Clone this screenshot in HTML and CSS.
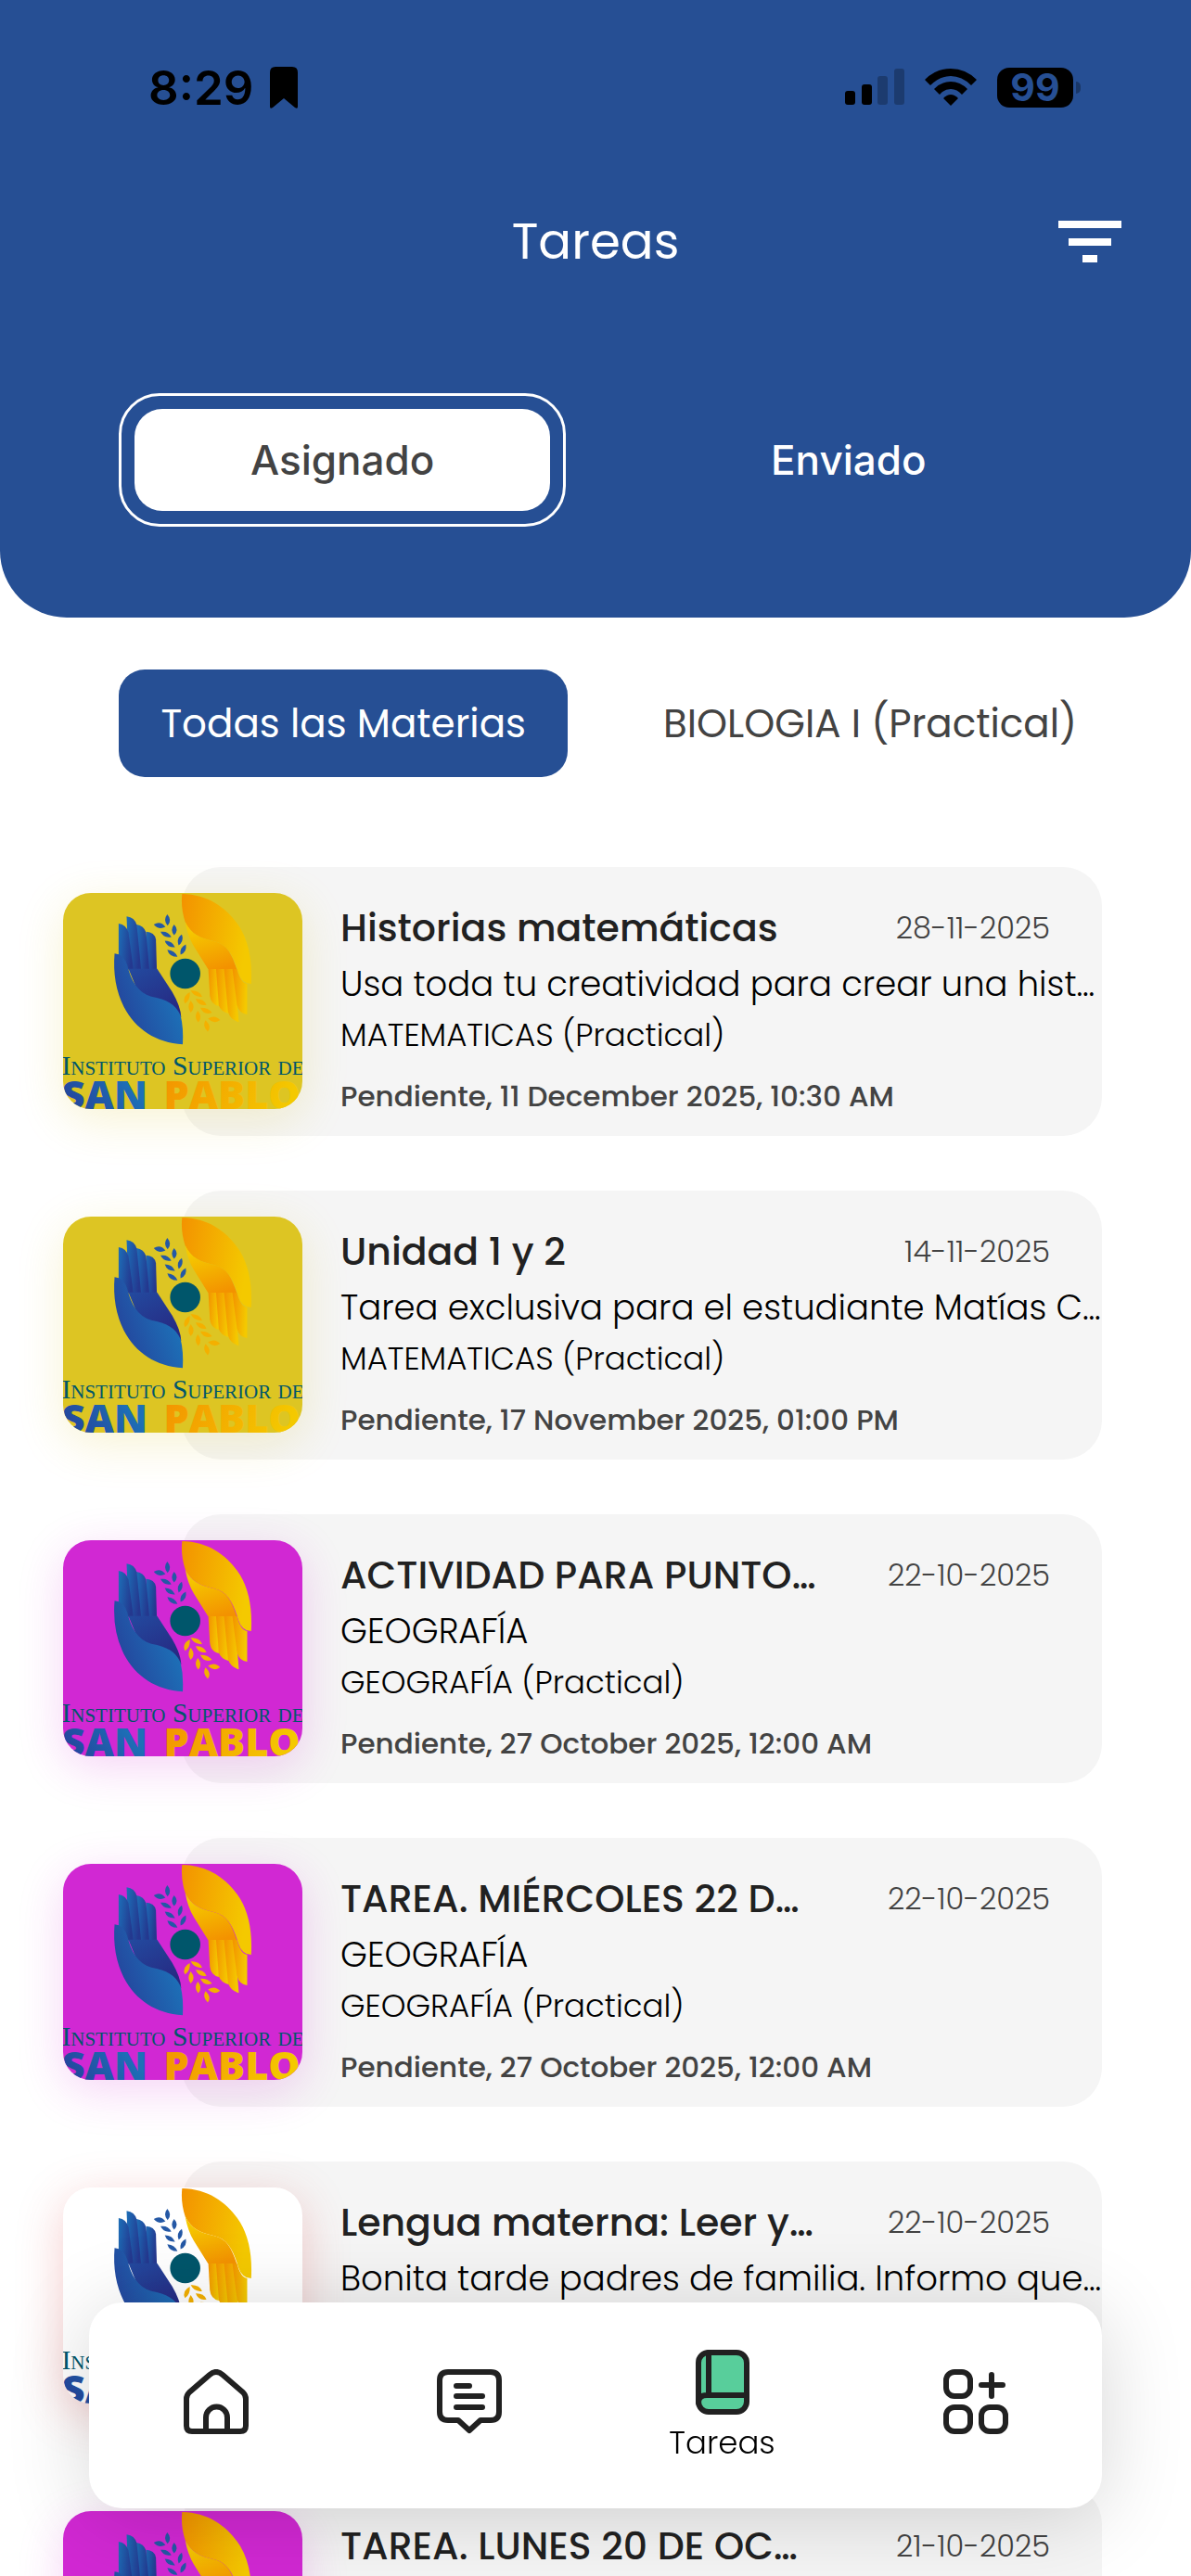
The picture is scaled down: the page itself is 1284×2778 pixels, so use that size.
FILE: index.html
```
<!DOCTYPE html>
<html lang="es">
<head>
  <meta charset="UTF-8" />
  <meta name="viewport" content="width=device-width, initial-scale=1.0"/>
  <title>Tareas</title>
  <link rel="stylesheet" href="styles.css">
</head>
<body>
  <!-- shared school logo -->
  <svg class="defs" width="0" height="0" aria-hidden="true">
    <defs>
      <linearGradient id="blueA" x1="0" y1="0" x2="1" y2="0.3">
        <stop offset="0" stop-color="#1d6fb8"/><stop offset="1" stop-color="#24388f"/>
      </linearGradient>
      <linearGradient id="blueB" x1="0.9" y1="0.5" x2="0.1" y2="0.9">
        <stop offset="0" stop-color="#1d70b7"/><stop offset="1" stop-color="#25419a"/>
      </linearGradient>
      <linearGradient id="blueC" x1="0" y1="0" x2="0.6" y2="1">
        <stop offset="0" stop-color="#234a9f"/><stop offset="1" stop-color="#262a83"/>
      </linearGradient>
      <linearGradient id="goldA" x1="0" y1="0" x2="1" y2="0.2">
        <stop offset="0" stop-color="#f39200"/><stop offset="1" stop-color="#f4c900"/>
      </linearGradient>
      <linearGradient id="goldB" x1="0.4" y1="0.1" x2="0.7" y2="1">
        <stop offset="0" stop-color="#f5c800"/><stop offset="1" stop-color="#f39200"/>
      </linearGradient>
      <symbol id="logo" viewBox="24 18 776 699">
        <g fill="url(#blueA)">
          <path d="M294 143Q320 144 325 168L328 265H290Z"/>
          <path d="M262 119Q286 122 293 145L304 265H262Z"/>
          <path d="M230 93Q256 96 263 121L277 265H237Z"/>
          <path d="M204 116Q229 120 236 145L252 265H204Z"/>
        </g>
        <path fill="url(#blueC)" d="M236 263H329L378 338Q405 384 407 420L340 385L270 345Z"/>
        <path fill="url(#blueB)" d="M191 213Q221 215 232 251C245 303 266 340 310 353C360 362 388 377 405 414Q415 455 412 508C325 502 260 460 221 386Q183 310 191 213Z"/>
        <path fill="url(#goldA)" d="M410 20C500 22 560 70 598 130Q640 200 634 312Q604 312 592 275C575 215 555 184 515 174C465 164 440 150 420 111Q405 66 410 20Z"/>
        <path fill="url(#goldB)" d="M420 111C440 150 465 164 515 174C555 184 570 212 587 264H494L448 190Q428 157 420 111Z"/>
        <g fill="url(#goldA)">
          <path d="M495 264H530L529 384Q503 378 500 350Z"/>
          <path d="M520 264H555L562 409Q535 402 529 382Z"/>
          <path d="M546 264H580L594 436Q565 427 559 402Z"/>
          <path d="M573 264H588Q600 310 621 312V411Q594 407 588 380Z"/>
        </g>
        <circle cx="420" cy="279" r="49" fill="#00566b"/>
        <g fill="#2458a5">
          <path d="M362 86Q379 106 363 123Q347 105 362 86Z"/>
          <path d="M384 119Q401 137 384 154Q370 137 384 119Z"/>
          <path d="M409 152Q417 174 399 187Q390 165 409 152Z"/>
          <path d="M422 184Q427 208 405 217Q401 194 422 184Z"/>
          <path d="M318 119Q340 106 356 127Q334 138 318 119Z"/>
          <path d="M340 143Q364 139 375 160Q350 165 340 143Z"/>
          <path d="M354 172Q378 172 387 193Q361 195 354 172Z"/>
          <path d="M362 201Q387 203 395 224Q368 224 362 201Z"/>
        </g>
        <g fill="#f4b000">
          <path d="M438 334Q464 332 475 353Q450 357 438 334Z"/>
          <path d="M454 361Q480 360 489 380Q463 385 454 361Z"/>
          <path d="M469 389Q494 388 507 405Q481 415 469 389Z"/>
          <path d="M533 429Q512 444 494 425Q516 410 533 429Z"/>
          <path d="M435 339Q437 365 419 376Q409 352 435 339Z"/>
          <path d="M438 366Q456 388 438 405Q424 388 438 366Z"/>
          <path d="M461 399Q478 419 462 437Q446 418 461 399Z"/>
          <path d="M486 430Q507 450 493 467Q474 448 486 430Z"/>
        </g>
        <text class="logo-top" x="412" y="608">Instituto Superior de</text>
        <text class="logo-name" x="20" y="719" fill="url(#blueB)">SAN</text>
        <text class="logo-name" x="350" y="719" fill="url(#goldA)">PABLO</text>
      </symbol>
    </defs>
  </svg>

  <div class="app">
    <header class="header">
      <div class="status-bar">
        <div class="status-left">
          <span class="time">8:29</span>
          <svg width="30" height="45" viewBox="0 0 30 45"><path d="M6 0H24Q30 0 30 6V43Q30 46 27 44L15 34L3 44Q0 46 0 43V6Q0 0 6 0Z"/></svg>
        </div>
        <div class="status-right">
          <svg width="64" height="40" viewBox="0 0 64 40">
            <rect x="0" y="24" width="11" height="15" rx="3"/>
            <rect x="18" y="17" width="11" height="22" rx="3"/>
            <rect x="35" y="8" width="11" height="31" rx="3" opacity=".25"/>
            <rect x="53" y="0" width="11" height="39" rx="3" opacity=".25"/>
          </svg>
          <svg width="56" height="40" viewBox="0 0 56 40">
            <path d="M0 12Q12 0 28 0T56 12L50 18Q40 8 28 8T6 18Z"/>
            <path d="M10 22Q18 14 28 14T46 22L40 28Q35 22 28 22T16 28Z"/>
            <path d="M20 32Q28 24 36 32L28 40Z"/>
          </svg>
          <div class="battery">99</div>
        </div>
      </div>

      <div class="title-bar">
        <h1>Tareas</h1>
        <button class="filter-btn" aria-label="Filtrar">
          <svg width="68" height="46" viewBox="0 0 68 46" fill="#fff">
            <rect width="68" height="8"/>
            <rect x="11" y="19" width="46" height="8"/>
            <rect x="26" y="37" width="16" height="8"/>
          </svg>
        </button>
      </div>

      <div class="tabs">
        <button class="tab active"><span>Asignado</span></button>
        <button class="tab"><span>Enviado</span></button>
      </div>
    </header>

    <div class="subjects">
      <button class="subject active">Todas las Materias</button>
      <button class="subject">BIOLOGIA I (Practical)</button>
    </div>

    <main class="task-list">
      <article class="task">
        <svg class="thumb yellow" role="img" aria-label="Logo"><use href="#logo"/></svg>
        <div class="info">
          <div class="row"><h2>Historias matemáticas</h2><time>28-11-2025</time></div>
          <p class="desc">Usa toda tu creatividad para crear una hist…</p>
          <p class="subject-name">MATEMATICAS (Practical)</p>
          <p class="due">Pendiente, 11 December 2025, 10:30 AM</p>
        </div>
      </article>

      <article class="task">
        <svg class="thumb yellow" role="img" aria-label="Logo"><use href="#logo"/></svg>
        <div class="info">
          <div class="row"><h2>Unidad 1 y 2</h2><time>14-11-2025</time></div>
          <p class="desc">Tarea exclusiva para el estudiante Matías C…</p>
          <p class="subject-name">MATEMATICAS (Practical)</p>
          <p class="due">Pendiente, 17 November 2025, 01:00 PM</p>
        </div>
      </article>

      <article class="task">
        <svg class="thumb pink" role="img" aria-label="Logo"><use href="#logo"/></svg>
        <div class="info">
          <div class="row"><h2>ACTIVIDAD PARA PUNTO…</h2><time>22-10-2025</time></div>
          <p class="desc">GEOGRAFÍA</p>
          <p class="subject-name">GEOGRAFÍA (Practical)</p>
          <p class="due">Pendiente, 27 October 2025, 12:00 AM</p>
        </div>
      </article>

      <article class="task">
        <svg class="thumb pink" role="img" aria-label="Logo"><use href="#logo"/></svg>
        <div class="info">
          <div class="row"><h2>TAREA. MIÉRCOLES 22 D…</h2><time>22-10-2025</time></div>
          <p class="desc">GEOGRAFÍA</p>
          <p class="subject-name">GEOGRAFÍA (Practical)</p>
          <p class="due">Pendiente, 27 October 2025, 12:00 AM</p>
        </div>
      </article>

      <article class="task">
        <svg class="thumb white" role="img" aria-label="Logo"><use href="#logo"/></svg>
        <div class="info">
          <div class="row"><h2>Lengua materna: Leer y…</h2><time>22-10-2025</time></div>
          <p class="desc">Bonita tarde padres de familia. Informo que…</p>
        </div>
      </article>

      <article class="task">
        <svg class="thumb pink" role="img" aria-label="Logo"><use href="#logo"/></svg>
        <div class="info">
          <div class="row"><h2>TAREA. LUNES 20 DE OC…</h2><time>21-10-2025</time></div>
        </div>
      </article>
    </main>
  </div>

  <nav class="bottom-nav">
    <a href="#" aria-label="Inicio">
      <svg width="70" height="70" viewBox="0 0 70 70">
        <path d="M3 32Q3 28 6 25L28 6Q35 0 42 6L64 25Q67 28 67 32V61Q67 67 61 67H9Q3 67 3 61Z"/>
        <path d="M24 67V52A11.500 11.500 0 0 1 47 52V67"/>
      </svg>
    </a>
    <a href="#" aria-label="Mensajes">
      <svg width="70" height="70" viewBox="0 0 70 70">
        <path d="M12 3H58Q67 3 67 12V46Q67 55 58 55H47L35 66L23 55H12Q3 55 3 46V12Q3 3 12 3Z"/>
        <path d="M21 18H35M21 29H49M21 41H49"/>
      </svg>
    </a>
    <a href="#" class="current">
      <svg width="58" height="70" viewBox="0 0 58 70">
        <rect x="3" y="3" width="52" height="64" rx="11" fill="#58ce9b"/>
        <path d="M14 3V49M3 57Q3 49 12 49H55"/>
      </svg>
      <span>Tareas</span>
    </a>
    <a href="#" aria-label="Más">
      <svg width="70" height="70" viewBox="0 0 70 70">
        <rect x="3" y="3" width="26" height="26" rx="9"/>
        <rect x="3" y="41" width="26" height="26" rx="9"/>
        <rect x="41" y="41" width="26" height="26" rx="9"/>
        <path d="M52 6V29M41 17H64"/>
      </svg>
    </a>
  </nav>
</body>
</html>
```
FILE: styles.css
```
:root {
  --blue: #264f94;
  --card: #f5f5f5;
  --text: #212121;
  --muted: #434343;
}
* {
  margin: 0;
  padding: 0;
  box-sizing: border-box;
}
body {
  font-family: 'Poppins', 'Inter', sans-serif;
  background: #fff;
  color: var(--text);
}
button {
  font-family: inherit;
  background: none;
  border: none;
  cursor: pointer;
}
.defs {
  position: absolute;
}
.app {
  display: flex;
  flex-direction: column;
  height: 100vh;
  overflow: hidden;
}

/* header */
.header {
  background: var(--blue);
  border-radius: 0 0 72px 72px;
  padding-bottom: 98px;
}
.status-bar {
  display: flex;
  justify-content: space-between;
  align-items: center;
  height: 140px;
  padding: 48px 127px 0 160px;
  color: #000;
  font-family: 'Inter', sans-serif;
}
.status-left, .status-right {
  display: flex;
  align-items: center;
}
.status-left {
  gap: 18px;
}
.status-right {
  gap: 22px;
}
.time {
  font-size: 51px;
  font-weight: 600;
}
.battery {
  position: relative;
  width: 82px;
  height: 43px;
  border-radius: 13px;
  background: #000;
  color: var(--blue);
  font-size: 41px;
  font-weight: 700;
  line-height: 43px;
  text-align: center;
}
.battery::after {
  content: "";
  position: absolute;
  right: -8px;
  top: 15px;
  width: 5px;
  height: 13px;
  border-radius: 0 5px 5px 0;
  background: rgba(0,0,0,0.3);
}
.title-bar {
  display: grid;
  grid-template-columns: 1fr auto 1fr;
  align-items: center;
  height: 242px;
  padding: 0 75px;
}
.title-bar h1 {
  grid-column: 2;
  color: #fff;
  font-size: 53px;
  font-weight: 400;
}
.filter-btn {
  justify-self: end;
}
.filter-btn svg {
  display: block;
}
.tabs {
  display: grid;
  grid-template-columns: 1fr 1fr;
  gap: 64px;
  margin: 42px 10% 0;
}
.tab {
  height: 144px;
  padding: 14px;
  border: 3px solid transparent;
  border-radius: 44px;
  color: #fff;
  font-family: 'Inter', sans-serif;
  font-size: 44px;
  font-weight: 500;
}
.tab span {
  display: flex;
  align-items: center;
  justify-content: center;
  height: 100%;
  border-radius: 30px;
}
.tab.active {
  border-color: #fff;
}
.tab.active span {
  background: #fff;
  color: var(--muted);
}

/* subject filter */
.subjects {
  display: flex;
  gap: 58px;
  margin-top: 56px;
  padding-left: 10%;
  overflow: hidden;
}
.subject {
  flex: none;
  height: 116px;
  padding: 0 45px;
  border-radius: 28px;
  color: var(--muted);
  font-size: 42px;
  font-weight: 400;
}
.subject.active {
  background: var(--blue);
  color: #fff;
}

/* tasks */
.task-list {
  flex: 1;
  display: flex;
  flex-direction: column;
  gap: 59px;
  padding: 97px 96px 0 196px;
  overflow-y: auto;
  scrollbar-width: none;
}
.task {
  flex: none;
  display: flex;
  align-items: flex-start;
  gap: 41px;
  min-height: 290px;
  padding: 28px 0 17px;
  border-radius: 42px;
  background: var(--card);
}
.thumb {
  flex: none;
  width: 258px;
  height: 233px;
  margin-left: -128px;
  border-radius: 30px;
}
.yellow {
  background: #ddc523;
  box-shadow: 0 12px 50px rgba(221,197,35,0.2);
}
.pink {
  background: #d128d3;
  box-shadow: 0 12px 50px rgba(209,40,211,0.2);
}
.white {
  background: #fff;
  box-shadow: 0 12px 50px rgba(220,60,60,0.25);
}
.logo-top {
  font-family: 'Liberation Serif', serif;
  font-size: 89px;
  font-variant: small-caps;
  text-anchor: middle;
  fill: #00566b;
}
.logo-name {
  font-family: 'Open Sans', sans-serif;
  font-size: 130px;
  font-weight: 800;
}
.info {
  flex: 1;
  min-width: 0;
  padding-top: 8px;
  white-space: nowrap;
}
.row {
  display: flex;
  justify-content: space-between;
  align-items: center;
  padding-right: 56px;
}
.row h2 {
  font-size: 41px;
  font-weight: 500;
  line-height: 60px;
}
.row time {
  color: var(--muted);
  font-size: 32px;
  font-weight: 300;
}
.desc {
  font-size: 37px;
  line-height: 60px;
}
.subject-name {
  font-size: 34px;
  line-height: 50px;
}
.desc, .subject-name {
  color: #000;
  font-weight: 300;
}
.due {
  margin-top: 16px;
  color: var(--muted);
  font-size: 31px;
  font-weight: 500;
  line-height: 50px;
}

/* bottom navigation */
.bottom-nav {
  position: fixed;
  left: 96px;
  right: 96px;
  bottom: 73px;
  display: grid;
  grid-template-columns: repeat(4, 1fr);
  height: 222px;
  border-radius: 36px;
  background: #fff;
  box-shadow: 0 10px 90px rgba(0,0,0,0.16);
}
.bottom-nav a {
  display: flex;
  flex-direction: column;
  align-items: center;
  justify-content: center;
  gap: 10px;
  padding-bottom: 8px;
  color: #000;
  font-size: 34px;
  font-weight: 300;
  line-height: 40px;
  text-decoration: none;
}
.bottom-nav .current {
  padding-bottom: 0;
}
.bottom-nav svg {
  fill: none;
  stroke: var(--text);
  stroke-width: 6;
  stroke-linecap: round;
  stroke-linejoin: round;
}
```
